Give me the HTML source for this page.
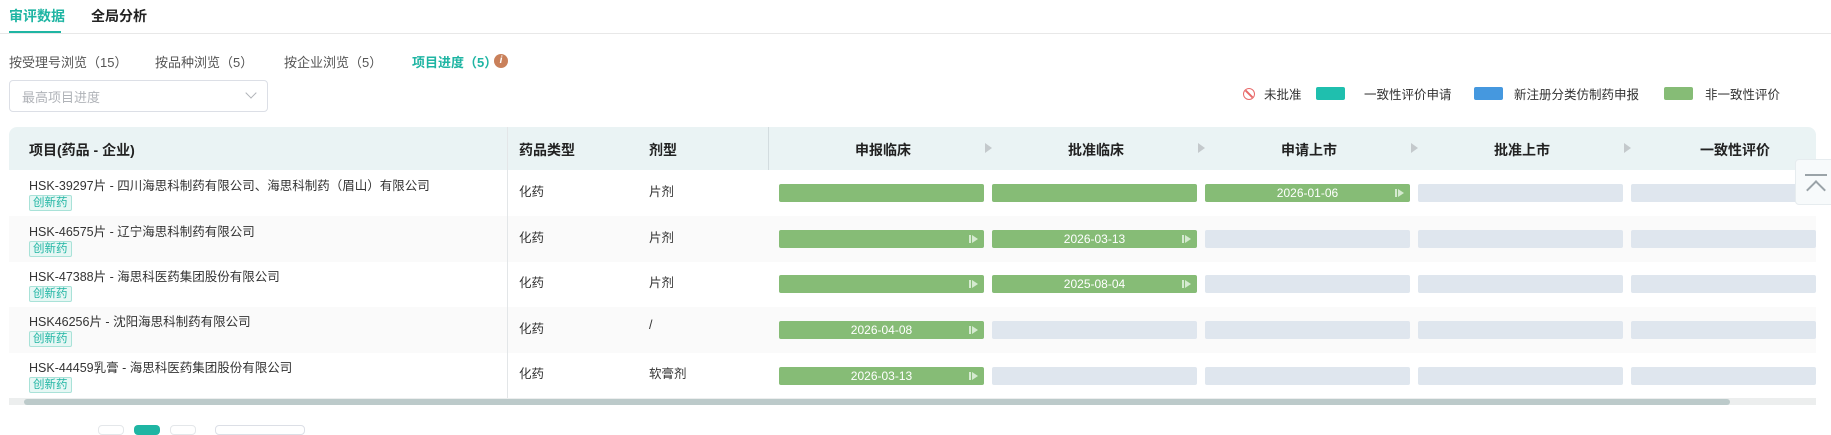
<!DOCTYPE html>
<html><head><meta charset="utf-8"><style>
*{margin:0;padding:0;box-sizing:border-box}
body{width:1831px;height:427px;overflow:hidden;background:#fff;font-family:"Liberation Sans","Noto Sans CJK SC",sans-serif;color:#333;position:relative}
.a{position:absolute;white-space:nowrap}
.tab{font-size:14px;font-weight:bold;top:6px}
.sub{font-size:13px;top:52px;color:#555}
.teal{color:#1fb5a3}
.lg{top:84px;font-size:12.5px;color:#333}
.box{width:29px;height:13px;border-radius:2px;top:87px}
.hdr{left:9px;top:127px;width:1807px;height:43px;background:#eaf3f4;border-radius:8px 8px 0 0}
.ht{font-size:14px;font-weight:bold;color:#222;top:140px}
.c1{font-size:12.5px;color:#333}
.tag{font-size:11.5px;color:#1fb5a3;background:#e6f7f4;border:1px solid #a9e2d8;border-radius:2px;padding:0 3px;height:16px;line-height:14px}
.bar{height:18px;border-radius:2px;background:#dfe6ee;width:205px}
.g{background:#86bc76;color:#fff;font-size:12px;text-align:center;line-height:18px}
.g.ar::after{content:"";position:absolute;right:6px;top:5px;border-left:6px solid #d5ead0;border-top:4px solid transparent;border-bottom:4px solid transparent}
.g.ar::before{content:"";position:absolute;right:13px;top:5px;width:2px;height:8px;background:#d5ead0}
.harr{top:143px;border-left:7px solid #c4c9cc;border-top:5px solid transparent;border-bottom:5px solid transparent}
</style></head><body>
<div class="a tab teal" style="left:9px">审评数据</div>
<div class="a" style="left:9px;top:31px;width:52px;height:2px;background:#1fb5a3"></div>
<div class="a tab" style="left:91px;color:#222">全局分析</div>
<div class="a" style="left:0;top:33px;width:1831px;height:1px;background:#e8e8e8"></div>

<div class="a sub" style="left:9px">按受理号浏览（15）</div>
<div class="a sub" style="left:155px">按品种浏览（5）</div>
<div class="a sub" style="left:284px">按企业浏览（5）</div>
<div class="a sub teal" style="left:412px;font-weight:bold">项目进度（5）</div>
<div class="a" style="left:494px;top:54px;width:14px;height:14px;border-radius:50%;background:#c9805a;color:#fff;font-size:10px;font-style:italic;font-weight:bold;text-align:center;line-height:14px">i</div>

<div class="a" style="left:9px;top:80px;width:259px;height:32px;border:1px solid #dcdfe6;border-radius:4px"></div>
<div class="a" style="left:22px;top:87px;font-size:13px;color:#b0b3b8">最高项目进度</div>
<div class="a" style="left:247px;top:89px;width:8px;height:8px;border-right:1px solid #b0b3b8;border-bottom:1px solid #b0b3b8;transform:rotate(45deg)"></div>

<div class="a" style="left:1243px;top:88px;width:12px;height:12px;border:1.5px solid #e86a6a;border-radius:50%;overflow:hidden"><div style="position:absolute;left:4px;top:-2px;width:1.5px;height:14px;background:#e86a6a;transform:rotate(-45deg)"></div></div>
<div class="a lg" style="left:1264px">未批准</div>
<div class="a box" style="left:1316px;background:#1fbfae"></div>
<div class="a lg" style="left:1364px">一致性评价申请</div>
<div class="a box" style="left:1474px;background:#4598df"></div>
<div class="a lg" style="left:1514px">新注册分类仿制药申报</div>
<div class="a box" style="left:1664px;background:#86bc76"></div>
<div class="a lg" style="left:1705px">非一致性评价</div>

<div class="a hdr"></div>
<div class="a" style="left:9px;top:216px;width:1807px;height:46px;background:#fafafa"></div>
<div class="a" style="left:9px;top:307px;width:1807px;height:46px;background:#fafafa"></div>
<div class="a" style="left:507px;top:127px;width:1px;height:271px;background:#e3e6e8"></div>
<div class="a" style="left:768px;top:127px;width:1px;height:43px;background:#d3dcdf"></div>
<div class="a ht" style="left:29px">项目(药品 - 企业)</div>
<div class="a ht" style="left:519px">药品类型</div>
<div class="a ht" style="left:649px">剂型</div>
<div class="a ht" style="left:855px">申报临床</div>
<div class="a ht" style="left:1068px">批准临床</div>
<div class="a ht" style="left:1281px">申请上市</div>
<div class="a ht" style="left:1494px">批准上市</div>
<div class="a ht" style="left:1700px">一致性评价</div>
<div class="a harr" style="left:985px"></div>
<div class="a harr" style="left:1198px"></div>
<div class="a harr" style="left:1411px"></div>
<div class="a harr" style="left:1624px"></div>

<div class="a c1" style="left:29px;top:175px">HSK-39297片 - 四川海思科制药有限公司、海思科制药（眉山）有限公司</div>
<div class="a tag" style="left:29px;top:195px">创新药</div>
<div class="a c1" style="left:519px;top:181px">化药</div><div class="a c1" style="left:649px;top:181px">片剂</div>
<div class="a bar g" style="left:779px;top:184px"></div>
<div class="a bar g" style="left:992px;top:184px"></div>
<div class="a bar g ar" style="left:1205px;top:184px">2026-01-06</div>
<div class="a bar" style="left:1418px;top:184px"></div>
<div class="a bar" style="left:1631px;top:184px;width:185px"></div>

<div class="a c1" style="left:29px;top:221px">HSK-46575片 - 辽宁海思科制药有限公司</div>
<div class="a tag" style="left:29px;top:241px">创新药</div>
<div class="a c1" style="left:519px;top:227px">化药</div><div class="a c1" style="left:649px;top:227px">片剂</div>
<div class="a bar g ar" style="left:779px;top:230px"></div>
<div class="a bar g ar" style="left:992px;top:230px">2026-03-13</div>
<div class="a bar" style="left:1205px;top:230px"></div>
<div class="a bar" style="left:1418px;top:230px"></div>
<div class="a bar" style="left:1631px;top:230px;width:185px"></div>

<div class="a c1" style="left:29px;top:266px">HSK-47388片 - 海思科医药集团股份有限公司</div>
<div class="a tag" style="left:29px;top:286px">创新药</div>
<div class="a c1" style="left:519px;top:272px">化药</div><div class="a c1" style="left:649px;top:272px">片剂</div>
<div class="a bar g ar" style="left:779px;top:275px"></div>
<div class="a bar g ar" style="left:992px;top:275px">2025-08-04</div>
<div class="a bar" style="left:1205px;top:275px"></div>
<div class="a bar" style="left:1418px;top:275px"></div>
<div class="a bar" style="left:1631px;top:275px;width:185px"></div>

<div class="a c1" style="left:29px;top:311px">HSK46256片 - 沈阳海思科制药有限公司</div>
<div class="a tag" style="left:29px;top:331px">创新药</div>
<div class="a c1" style="left:519px;top:318px">化药</div><div class="a c1" style="left:649px;top:318px">/</div>
<div class="a bar g ar" style="left:779px;top:321px">2026-04-08</div>
<div class="a bar" style="left:992px;top:321px"></div>
<div class="a bar" style="left:1205px;top:321px"></div>
<div class="a bar" style="left:1418px;top:321px"></div>
<div class="a bar" style="left:1631px;top:321px;width:185px"></div>

<div class="a c1" style="left:29px;top:357px">HSK-44459乳膏 - 海思科医药集团股份有限公司</div>
<div class="a tag" style="left:29px;top:377px">创新药</div>
<div class="a c1" style="left:519px;top:363px">化药</div><div class="a c1" style="left:649px;top:363px">软膏剂</div>
<div class="a bar g ar" style="left:779px;top:367px">2026-03-13</div>
<div class="a bar" style="left:992px;top:367px"></div>
<div class="a bar" style="left:1205px;top:367px"></div>
<div class="a bar" style="left:1418px;top:367px"></div>
<div class="a bar" style="left:1631px;top:367px;width:185px"></div>

<div class="a" style="left:9px;top:398px;width:1807px;height:7px;background:#eceeee"></div>
<div class="a" style="left:24px;top:399px;width:1706px;height:6px;border-radius:3px;background:#bccaca"></div>

<div class="a" style="left:1795px;top:159px;width:40px;height:46px;background:#f7fafb;border:1px solid #e6ecef;border-radius:4px"></div>
<div class="a" style="left:1805px;top:174px;width:22px;height:2px;background:#9aa3a8"></div>
<div class="a" style="left:1809px;top:183px;width:14px;height:14px;border-left:2px solid #9aa3a8;border-top:2px solid #9aa3a8;transform:rotate(45deg)"></div>

<div class="a" style="left:98px;top:425px;width:26px;height:10px;border:1px solid #e4e7ea;border-radius:4px"></div>
<div class="a" style="left:134px;top:425px;width:26px;height:10px;background:#1fb5a3;border-radius:4px"></div>
<div class="a" style="left:170px;top:425px;width:26px;height:10px;border:1px solid #e4e7ea;border-radius:4px"></div>
<div class="a" style="left:215px;top:425px;width:90px;height:10px;border:1px solid #dcdfe6;border-radius:4px"></div>
</body></html>
